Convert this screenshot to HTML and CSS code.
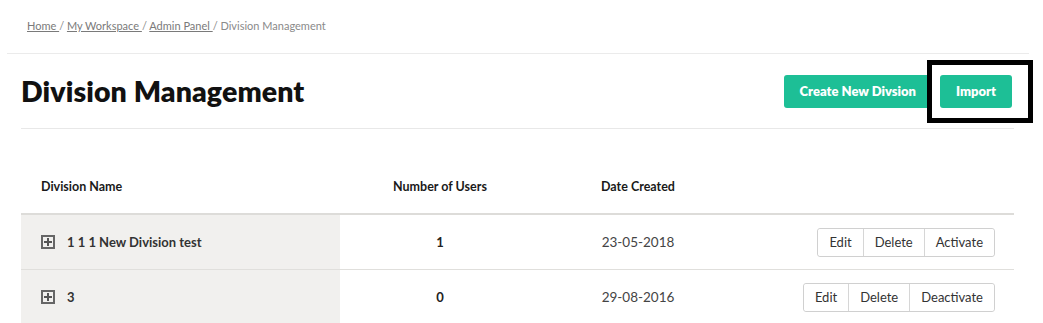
FILE: index.html
```html
<!DOCTYPE html>
<html lang="en">
<head>
  <meta charset="UTF-8" />
  <meta name="viewport" content="width=device-width, initial-scale=1.0"/>
  <title>Division Management</title>
  <link rel="stylesheet" href="styles.css">
</head>
<body>
  <div class="breadcrumb">
    <a href="#">Home </a>/ <a href="#">My Workspace </a>/ <a href="#">Admin Panel </a>/ Division Management
  </div>

  <div class="content">
    <div class="page-header">
      <h1>Division Management</h1>
      <div class="header-actions">
        <button class="btn-green">Create New Divsion</button>
        <button class="btn-green">Import</button>
      </div>
    </div>

    <table class="divisions">
      <thead>
        <tr>
          <th class="col-name">Division Name</th>
          <th class="col-users">Number of Users</th>
          <th class="col-date">Date Created</th>
          <th class="col-actions"></th>
        </tr>
      </thead>
      <tbody>
        <tr>
          <td class="col-name"><span class="expand"></span>1 1 1 New Division test</td>
          <td class="col-users">1</td>
          <td class="col-date">23-05-2018</td>
          <td class="col-actions">
            <div class="btn-group">
              <button>Edit</button><button>Delete</button><button>Activate</button>
            </div>
          </td>
        </tr>
        <tr>
          <td class="col-name"><span class="expand"></span>3</td>
          <td class="col-users">0</td>
          <td class="col-date">29-08-2016</td>
          <td class="col-actions">
            <div class="btn-group">
              <button>Edit</button><button>Delete</button><button>Deactivate</button>
            </div>
          </td>
        </tr>
      </tbody>
    </table>
  </div>

  <div class="highlight"></div>
</body>
</html>
```

FILE: styles.css
```css
body {
  margin: 0;
  padding: 0;
  font-family: Lato, "Liberation Sans", sans-serif;
  background: #fff;
  color: #333;
  overflow: hidden;
}

.breadcrumb {
  margin: 0 14px 0 7px;
  padding: 18px 20px 20px;
  border-bottom: 1px solid #ebebeb;
  font-size: 11px;
  line-height: 15px;
  color: #8a8a8a;
}

.breadcrumb a {
  color: #7a7a7a;
  text-decoration: underline;
}

.content {
  padding: 0 29px 0 21px;
}

.page-header {
  display: flex;
  align-items: center;
  justify-content: space-between;
  padding: 20px 2px 20px 0;
  height: 34px;
  border-bottom: 1px solid #e8e8e8;
}

h1 {
  margin: 0;
  font-size: 28.5px;
  font-weight: 800;
  color: #111;
  letter-spacing: 0.1px;
}

.header-actions {
  display: flex;
  gap: 8px;
}

.btn-green {
  height: 33px;
  padding: 0 16px;
  font-family: inherit;
  font-size: 13px;
  font-weight: 800;
  color: #fff;
  background-color: #1dbf96;
  border: none;
  border-radius: 3px;
}

.divisions {
  width: 100%;
  margin-top: 31px;
  border-collapse: collapse;
}

.divisions th {
  height: 53px;
  font-size: 12.5px;
  font-weight: 700;
  color: #1a1a1a;
  border-bottom: 2px solid #dddcd9;
  padding: 0;
}

.divisions td {
  height: 54px;
  padding: 0;
  font-size: 13px;
  border-bottom: 1px solid #e0dfdc;
}

.col-name {
  width: 299px;
  padding-left: 20px !important;
  text-align: left;
}

td.col-name {
  background-color: #f1f0ee;
  font-weight: 700;
  color: #333;
}

.col-users {
  width: 200px;
  text-align: center;
}

td.col-users {
  font-weight: 700;
  color: #222;
}

.col-date {
  width: 196px;
  text-align: center;
}

td.col-date {
  font-size: 13.5px;
  color: #444;
}

.col-actions {
  text-align: right;
  padding-right: 19px !important;
}

.expand {
  display: inline-block;
  position: relative;
  width: 10px;
  height: 10px;
  border: 2px solid #666;
  margin-right: 12px;
  vertical-align: -2px;
}

.expand::before,
.expand::after {
  content: "";
  position: absolute;
  background: #555;
}

.expand::before {
  left: 1px;
  top: 4px;
  width: 8px;
  height: 2px;
}

.expand::after {
  left: 4px;
  top: 1px;
  width: 2px;
  height: 8px;
}

.btn-group {
  display: inline-flex;
  border: 1px solid #d0d0d0;
  border-radius: 3px;
}

.btn-group button {
  height: 27px;
  padding: 0 11px;
  font-family: inherit;
  font-size: 13px;
  color: #333;
  background: #fff;
  border: none;
  border-left: 1px solid #d6d6d6;
}

.btn-group button:first-child {
  border-left: none;
  border-radius: 3px 0 0 3px;
}

.btn-group button:last-child {
  border-radius: 0 3px 3px 0;
}

.highlight {
  position: absolute;
  left: 927px;
  top: 60px;
  width: 96px;
  height: 53px;
  border: 5px solid #000;
}
```
